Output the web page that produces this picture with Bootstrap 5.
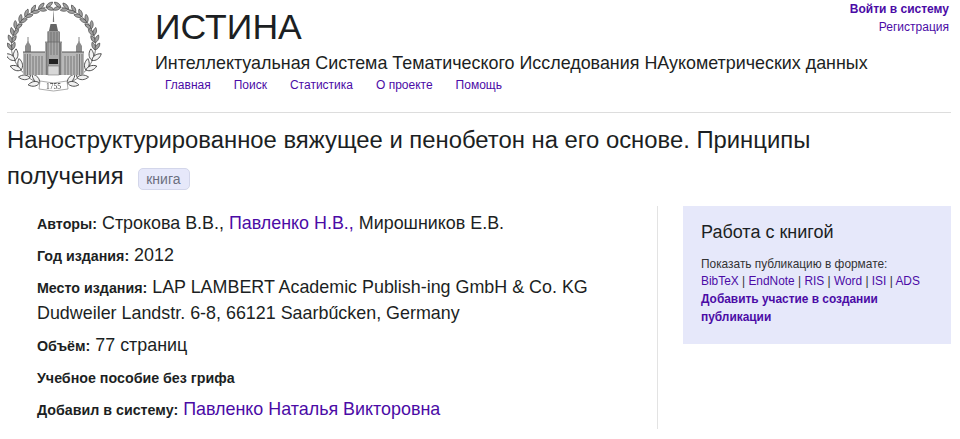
<!DOCTYPE html>
<html lang="ru"><head><meta charset="utf-8"><title>ИСТИНА</title>
<link href="https://cdn.jsdelivr.net/npm/bootstrap@5.3.0/dist/css/bootstrap.min.css" rel="stylesheet">
<style>
html,body{height:439px;overflow:hidden}
body{font-family:"Liberation Sans",Arial,sans-serif;color:#1c1f23;font-size:12px;background:#fff}
a{color:#4b0ba6;text-decoration:none}
.shell{padding:0 9px 0 7px}
.top-head{height:113px;border-bottom:1px solid #ddd}
.logo-box{width:148px;flex:none}
.brand{font-size:35.6px;line-height:40px;padding-top:7px;font-weight:400}
.tagline{font-size:17.9px;line-height:22px;margin-top:5px}
.menu-row{gap:23px;padding-left:10px;margin-top:2px;line-height:18px}
.user-links{position:absolute;right:11px;top:0;text-align:right;line-height:18px}
.pub-title{font-size:23.85px;line-height:36px;font-weight:400;margin:9px 40px 0 0;height:84px}
.kind{display:inline-block;font-size:14px;line-height:20px;padding:0 9px 0 7px;color:#6c6f80;background:#e6e8fa;border:1px solid #d3d6ea;border-radius:5px;margin-left:8px;vertical-align:0}
.info-col{width:651px;height:223px;border-right:1px solid #e3e3e3;padding:4px 0 0 30px}
.info-row{font-size:17.9px;line-height:26px;margin-bottom:6px}
.info-row b{font-size:14.25px;line-height:1}
.work-box{width:268px;height:138px;background:#e6e8fa;margin-left:25px;padding:14px 18px}
.work-title{font-size:18px;line-height:24px;margin-bottom:11.6px;font-weight:400}
.work-text{font-size:11.9px;line-height:17.7px;color:#333}
.logo-art{display:block;filter:blur(.35px)}
</style></head><body>
<div class="shell position-relative">
<div class="top-head d-flex">
<div class="logo-box">
<svg class="logo-art" width="100" height="96" viewBox="7 0 100 96" role="img" aria-label="МГУ">
<defs>
<path id="lf" d="M0 0C2-2.2 6-2.2 8.5 0 6 2.2 2 2.2 0 0Z" fill="#a0a0a0" stroke="#444" stroke-width=".7"/>
<path id="lg" d="M0 0C3-3.2 8-3.2 12 0 8 3.2 3 3.2 0 0Z" fill="#f2f2f2" stroke="#444" stroke-width=".9"/>
<g id="pa"><use href="#lf" transform="rotate(28)"/><use href="#lf" transform="rotate(-28)"/></g>
<g id="pb"><use href="#lg" transform="rotate(30)"/><use href="#lg" transform="rotate(-30)"/></g>
<g id="side">
<g transform="translate(2.1 1.8) scale(.96)">
<path d="M45 6C34 8 25 13 18 22 10 33 8 46 11 56 15 68 24 79 40 86" fill="none" stroke="#555" stroke-width=".8"/>
<use href="#pa" transform="translate(45.9 5.6) rotate(-10)"/>
<use href="#pa" transform="translate(38 7.6) rotate(-20)"/>
<use href="#pa" transform="translate(30.5 10.8) rotate(-32)"/>
<use href="#pa" transform="translate(24 15.6) rotate(-42)"/>
<use href="#pa" transform="translate(18.5 21.5) rotate(-54)"/>
<use href="#pa" transform="translate(14 28) rotate(-64)"/>
<use href="#pa" transform="translate(11.5 35) rotate(-76)"/>
<use href="#pa" transform="translate(10 42.4) rotate(-85)"/>
<use href="#pa" transform="translate(10.2 50) rotate(-97)"/>
<use href="#pb" transform="translate(13.6 61) rotate(-115)"/>
<use href="#pb" transform="translate(19.8 71) rotate(-130)"/>
<use href="#pb" transform="translate(29 79) rotate(-147)"/>
<use href="#pb" transform="translate(39 84.5) rotate(-160)"/>
</g>
<rect x="23" y="52" width="23" height="23" fill="#b9b9b9"/>
<path d="M25 52V46L28 41 31 46V52Z" fill="#8d8d8d"/>
<path d="M28 37V42" stroke="#666" stroke-width=".8"/>
<path d="M25 54V75M27.5 54V75M30 54V75M33 56V75M36 56V75M39 56V75M42 56V75" stroke="#666" stroke-width=".8"/>
<path d="M23 52H46" stroke="#555"/>
</g>
</defs>
<use href="#side"/>
<use href="#side" transform="translate(107 0) scale(-1 1)"/>
<path d="M53.5 8 54.2 22H52.8Z" fill="#777"/>
<path d="M49 31 50.5 24H56.5L58 31Z" fill="#666"/>
<rect x="47.5" y="31" width="12" height="11" fill="#999"/>
<rect x="45" y="42" width="17" height="33" fill="#aaa"/>
<path d="M45 42H62M48 32V75M51 32V55M54 32V55M57 32V55M59.5 32V75M46.5 43V75M60.5 43V75" stroke="#666" stroke-width=".7"/>
<rect x="49" y="59" width="9" height="5" fill="#222"/>
<rect x="48" y="66" width="11" height="9" fill="#d8d8d8" stroke="#666" stroke-width=".5"/>
<path d="M40 81 53.5 83 67 81 68 89 53.5 91 39 89Z" fill="#fff" stroke="#888" stroke-width=".7"/>
<text x="53.5" y="89" font-size="7.5" text-anchor="middle" fill="#333" font-family="Liberation Serif,serif">1755</text>
</svg></div>
<div>
<div class="brand">ИСТИНА</div>
<div class="tagline">Интеллектуальная Система Тематического Исследования НАукометрических данных</div>
<nav class="d-flex menu-row"><a href="#">Главная</a><a href="#">Поиск</a><a href="#">Статистика</a><a href="#">О проекте</a><a href="#">Помощь</a></nav>
</div>
</div>
<div class="user-links"><a href="#" class="fw-bold d-block">Войти в систему</a><a href="#" class="d-block">Регистрация</a></div>
<h1 class="pub-title">Наноструктурированное вяжущее и пенобетон на его основе. Принципы получения <span class="kind">книга</span></h1>
<div class="d-flex">
<div class="info-col">
<div class="info-row"><b>Авторы:</b> Строкова В.В., <a href="#">Павленко Н.В.,</a> Мирошников Е.В.</div>
<div class="info-row"><b>Год издания:</b> 2012</div>
<div class="info-row"><b>Место издания:</b> LAP LAMBERT Academic Publish-ing GmbH &amp; Co. KG Dudweiler Landstr. 6-8, 66121 Saarbűcken, Germany</div>
<div class="info-row"><b>Объём:</b> 77 страниц</div>
<div class="info-row"><b>Учебное пособие без грифа</b></div>
<div class="info-row"><b>Добавил в систему:</b> <a href="#">Павленко Наталья Викторовна</a></div>
</div>
<aside class="work-box">
<div class="work-title">Работа с книгой</div>
<div class="work-text">Показать публикацию в формате:<br><a href="#">BibTeX</a> | <a href="#">EndNote</a> | <a href="#">RIS</a> | <a href="#">Word</a> | <a href="#">ISI</a> | <a href="#">ADS</a><br><a href="#" class="fw-bold">Добавить участие в создании публикации</a></div>
</aside>
</div>
</div>
</body></html>
